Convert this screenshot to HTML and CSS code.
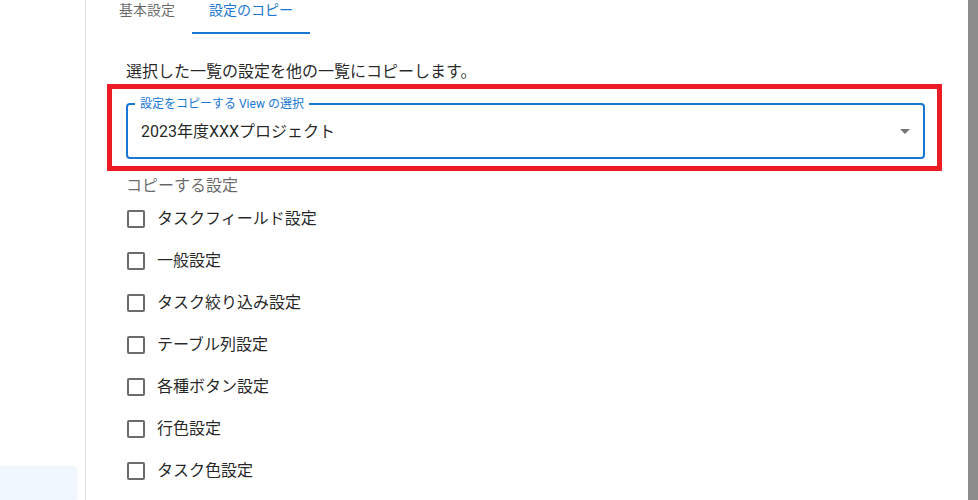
FILE: index.html
```html
<!DOCTYPE html>
<html lang="ja">
<head>
<meta charset="utf-8">
<title>設定のコピー</title>
<link rel="stylesheet" href="styles.css">
</head>
<body>
<div class="app">
  <aside class="sidebar">
    <div class="side-card"></div>
  </aside>
  <main class="main">
    <div class="tabs">
      <div class="tab">基本設定</div>
      <div class="tab active">設定のコピー</div>
    </div>
    <div class="content">
      <p class="desc">選択した一覧の設定を他の一覧にコピーします。</p>
      <div class="highlight">
        <div class="field">
          <span class="field-label">設定をコピーする View の選択</span>
          <span class="field-value">2023年度XXXプロジェクト</span>
          <svg class="arrow" viewBox="0 0 24 24" width="24" height="24"><path d="M7 10l5 5 5-5z"/></svg>
        </div>
      </div>
      <div class="group-label">コピーする設定</div>
      <div class="checks">
        <label class="check"><span class="box-wrap"><span class="box"></span></span><span class="check-text">タスクフィールド設定</span></label>
        <label class="check"><span class="box-wrap"><span class="box"></span></span><span class="check-text">一般設定</span></label>
        <label class="check"><span class="box-wrap"><span class="box"></span></span><span class="check-text">タスク絞り込み設定</span></label>
        <label class="check"><span class="box-wrap"><span class="box"></span></span><span class="check-text">テーブル列設定</span></label>
        <label class="check"><span class="box-wrap"><span class="box"></span></span><span class="check-text">各種ボタン設定</span></label>
        <label class="check"><span class="box-wrap"><span class="box"></span></span><span class="check-text">行色設定</span></label>
        <label class="check"><span class="box-wrap"><span class="box"></span></span><span class="check-text">タスク色設定</span></label>
      </div>
    </div>
  </main>
  <div class="scrollbar"></div>
</div>
</body>
</html>
```

FILE: styles.css
```css
* { box-sizing: border-box; }
html, body { margin: 0; padding: 0; height: 100%; overflow: hidden; background: #fff; }
body {
  font-family: Roboto, "Noto Sans CJK JP", "Noto Sans", sans-serif;
  color: rgba(0,0,0,0.87);
}
.app { display: flex; height: 500px; width: 978px; }
.sidebar {
  width: 86px;
  flex: 0 0 86px;
  border-right: 1px solid #e3e3e3;
  display: flex;
  flex-direction: column;
  justify-content: flex-end;
}
.side-card {
  width: 76px;
  height: 33px;
  background: #f0f7fe;
  border-top-right-radius: 4px;
  box-shadow: 1px -1px 2px rgba(0,0,0,0.06);
}
.main { flex: 1; min-width: 0; }
.scrollbar { width: 10px; flex: 0 0 10px; background: #8c8c8c; }
.tabs { display: flex; margin-left: 16px; height: 34px; }
.tab {
  min-width: 90px;
  padding: 0 17px;
  height: 34px;
  font-size: 14px;
  line-height: 20px;
  text-align: center;
  color: rgba(0,0,0,0.6);
  border-bottom: 2px solid transparent;
}
.tab.active { color: #1976d2; border-bottom-color: #1976d2; }
.content { padding-left: 40px; }
.desc { margin: 26px 0 0; font-size: 16px; line-height: 24px; height: 24px; }
.highlight {
  margin-left: -19px;
  width: 835px;
  height: 87px;
  border: 5px solid #ed1c24;
  padding: 14px 12px 7px 14px;
}
.field {
  position: relative;
  height: 56px;
  border: 2px solid #1976d2;
  border-radius: 4px;
  display: flex;
  align-items: center;
  padding-left: 13px;
}
.field-label {
  position: absolute;
  left: 7px;
  top: -9px;
  padding: 0 5px;
  background: #fff;
  color: #1976d2;
  font-size: 12px;
  line-height: 16px;
}
.field-value { flex: 1; font-size: 16px; line-height: 24px; margin-top: 2px; }
.arrow { fill: rgba(0,0,0,0.54); margin-right: 6px; }
.group-label {
  margin-top: 3px;
  font-size: 16px;
  line-height: 24px;
  color: rgba(0,0,0,0.6);
}
.checks { display: flex; flex-direction: column; }
.check { display: flex; align-items: center; height: 42px; margin-left: -11px; }
.box-wrap { width: 42px; height: 42px; padding: 12px; flex: 0 0 42px; }
.box {
  display: block;
  width: 18px;
  height: 18px;
  border: 2px solid #6b6b6b;
  border-radius: 2px;
}
.check-text { font-size: 16px; line-height: 24px; }
```
